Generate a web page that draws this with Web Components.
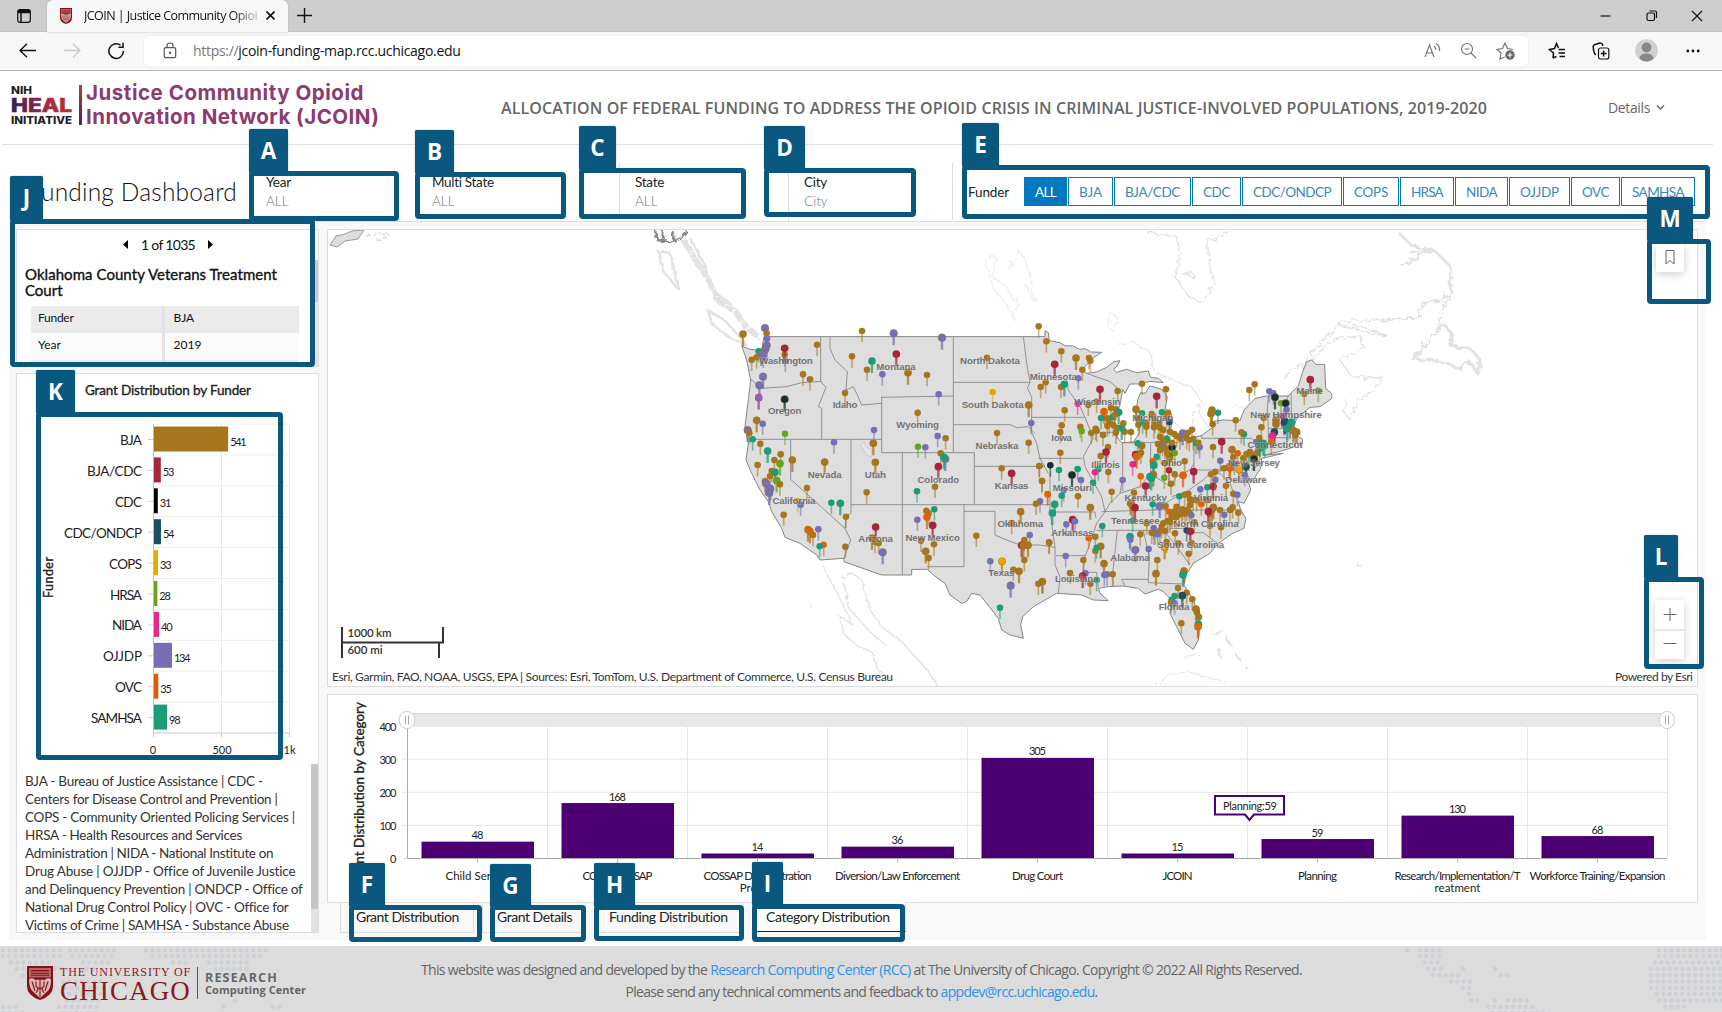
<!DOCTYPE html>
<html lang="en">
<head>
<meta charset="utf-8">
<title>JCOIN | Justice Community Opioid Innovation Network</title>
<style>
html,body{margin:0;padding:0;background:#fff;width:1722px;height:1012px;overflow:hidden}
body{font-family:"Open Sans","Liberation Sans",sans-serif}
</style>
</head>
<body>
<funding-page></funding-page>
<script>
const define = (name, css, html, after) => {
  const t = document.createElement('template');
  t.innerHTML = `<style>*{box-sizing:border-box}${css}</style>`;
  customElements.define(name, class extends HTMLElement {
    connectedCallback() {
      if (this.shadowRoot) return;
      const root = this.attachShadow({mode: 'open'});
      root.innerHTML = t.innerHTML + (typeof html === 'function' ? html(this) : html);
      if (after) after(this, root);
    }
  });
};

/* Single line of text whose tracking adapts to a given width */
define('fit-text', ':host{display:inline-block;white-space:nowrap}span{display:inline-block}', '<span><slot></slot></span>', (el, root) => {
  const w = parseFloat(el.getAttribute('w')), s = root.querySelector('span');
  if (!w) return;
  const n = el.textContent.length;
  s.style.letterSpacing = ((w - s.getBoundingClientRect().width) / n) + 'px';
  el.style.width = w + 'px';
});

define('uc-crest', ':host{display:block}svg{display:block;width:100%;height:100%}', `
<svg viewBox="0 0 26 33" preserveAspectRatio="none"><path d="M0 0H26V20Q26 29 13 33Q0 29 0 20Z" fill="#8a0f14"/>
<path d="M2 2H24V11H2Z" fill="#b06a6c"/><path d="M4 4.5H22M4 7H22M4 9H22" stroke="#8a0f14" stroke-width="1"/>
<path d="M2 12.5Q6 11 9 14Q11 12 13 14Q15 12 17 14Q20 11 24 12.5Q24.500 21 20 25L13 31L6 25Q2 21 2 12.500Z" fill="#d9b5b5"/>
<path d="M13 14V30M9 15V19L11 22M17 15V19L15 22M5 15L8 24M21 15L18 24M9 26L12 21M17 26L14 21" stroke="#8a0f14" stroke-width="1.100" fill="none"/></svg>`);

define('browser-chrome', `
:host{display:block;height:71px;background:#f7f7f7;border-bottom:1px solid #b5b5b5;font:13px "Open Sans",sans-serif;color:#111}
.tabs{height:32px;background:#cdcdcd;display:flex;align-items:center;border-bottom:1px solid #c2c2c2}
.side{width:47px;padding-left:17px;display:flex}
.tab{width:241px;height:32px;background:#f7f7f7;border-radius:6px 6px 0 0;display:flex;align-items:center;padding-left:13px;box-shadow:0 0 2px #aaa}
uc-crest{width:12px;height:16px;margin-right:12px}
.name{width:173px;height:18px;line-height:17px;font-size:12.500px;white-space:nowrap;-webkit-mask:linear-gradient(90deg,#000 86%,#0004 99%)}
svg{display:block;fill:none;stroke:#111;stroke-width:1.200;flex:none}
.win{margin-left:auto;display:flex;gap:33px;padding-right:19px}
.bar{height:37px;display:flex;align-items:center}
.field{width:1384px;height:30px;background:#fff;border-radius:4px;box-shadow:0 0 2px #ddd;display:flex;align-items:center;padding-left:19px;font-size:14px}
.url{margin-left:16px}.url i{font-style:normal;color:#777}
.r{margin-left:auto;display:flex;gap:19px;padding-right:13px}
`, `
<div class="tabs"><div class="side"><svg width="14" height="14"><rect x=".7" y=".7" width="12.600" height="12.600" rx="2"/><path d="M1 3.500H13M4 4V13" stroke-width="1.500"/><path d="M1 2H13" stroke-width="2"/></svg></div>
<div class="tab"><uc-crest></uc-crest><div class="name"><fit-text w="173">JCOIN | Justice Community Opioi</fit-text></div><svg style="margin-left:9px" width="9" height="9"><path d="M.5 .5L8.500 8.500M8.500 .5L.5 8.500" stroke-width="1.700"/></svg></div>
<svg style="margin-left:9px" width="15" height="15"><path d="M7.500 0V15M0 7.500H15" stroke-width="1.400"/></svg>
<div class="win"><svg width="11" height="12"><path d="M.5 6H10.500"/></svg><svg style="margin-left:2px" width="12" height="12"><rect x="1" y="3" width="7.500" height="7.500" rx="1.500"/><path d="M3.500 1H9Q10.500 1 10.500 2.500V8"/></svg><svg width="12" height="12"><path d="M1 1L11 11M11 1L1 11"/></svg></div></div>
<div class="bar"><svg style="margin-left:19px" width="17" height="15"><path d="M17 7.500H1M8 .8L1 7.500L8 14.200" stroke-width="1.400"/></svg>
<svg style="margin-left:28px;stroke:#c9c9c9" width="17" height="15"><path d="M0 7.500H16M9 .8L16 7.500L9 14.200" stroke-width="1.300"/></svg>
<svg style="margin-left:27px" width="17" height="18"><path d="M15.500 9A7.300 7.300 0 1 1 12.500 3.200M15 .8V5.200H10.500" stroke-width="1.500"/></svg>
<div class="field" style="margin-left:19px"><svg width="14" height="17" style="stroke:#555"><rect x="1.200" y="5.700" width="11.500" height="10" rx="1.500"/><path d="M4 5.500V3.500Q4 1 7 1Q10 1 10 3.500V5.500"/><circle cx="7" cy="10.700" r=".6" fill="#555"/></svg>
<span class="url"><fit-text w="267.500"><i>https://</i>jcoin-funding-map.rcc.uchicago.edu</fit-text></span>
<div class="r"><svg width="17" height="17" style="stroke:#777"><path d="M1 15L5.500 3L10 15M2.800 11H8.300M10 4Q12 5.500 12 8M12 1.500Q16 4 15.500 9"/></svg><svg width="17" height="17" style="stroke:#777"><circle cx="7" cy="7" r="5.500"/><path d="M11 11L16 16M4.500 7H9.500"/></svg><svg width="19" height="18" style="stroke:#777"><path d="M9 15L4 17L5 11L1 7.500L6.500 6.500L9 1L11.500 6.500L17 7.500"/><circle cx="14" cy="13" r="4.700" fill="#666" stroke="none"/><path d="M14 10.500V15.500M11.500 13H16.500" stroke="#fff"/></svg></div></div>
<svg style="margin-left:20px" width="18" height="18"><path d="M5 16L5.500 11L1.500 7.500L6.500 6.500L8.500 1.500L10.500 6M10.500 7.500H17M10.500 11H17M11.500 14.500H17M5 16L8.500 14.500" stroke-width="1.500"/></svg>
<svg style="margin-left:26px" width="18" height="18"><rect x="6.500" y="6" width="10.300" height="11" rx="2"/><path d="M11.600 8.500V14.500M8.800 11.500H14.500M3.800 13Q1.500 11 1.200 5Q1 3 3 2.500L8 1Q10 .8 10.700 3V4" stroke-width="1.500"/></svg>
<svg style="margin-left:25px;stroke:none" width="23" height="23"><circle cx="11.500" cy="11.500" r="11.300" fill="#d2d0ce"/><circle cx="11.500" cy="8.500" r="4.900" fill="#8a8886"/><path d="M4.500 19.500Q5 14.500 11.500 14.500Q18 14.500 18.500 19.500Q15 22.500 11.500 22.500Q8 22.500 4.500 19.500" fill="#8a8886"/></svg>
<svg style="margin-left:28px;stroke:none;fill:#111" width="14" height="4"><circle cx="1.800" cy="2" r="1.400"/><circle cx="7" cy="2" r="1.400"/><circle cx="12.200" cy="2" r="1.400"/></svg></div>`);

define('heal-logo', `:host{display:block;width:68px;height:42px;font-family:Inter,"Open Sans",sans-serif;font-weight:800}svg{display:block}`,
 `<svg width="68" height="42" fill="#222"><defs><linearGradient id="g" x1="0" x2="62" gradientUnits="userSpaceOnUse"><stop stop-color="#352052"/><stop offset=".6" stop-color="#a52b49"/><stop offset="1" stop-color="#b93627"/></linearGradient></defs>
<text y="9.500" font-size="10.500" textLength="21" lengthAdjust="spacingAndGlyphs">NIH</text><text y="27.500" font-size="18.500" fill="url(#g)" stroke="url(#g)" stroke-width=".6" textLength="61" lengthAdjust="spacingAndGlyphs">HEAL</text><text y="39.500" font-size="10.500" textLength="61" lengthAdjust="spacingAndGlyphs">INITIATIVE</text></svg>`);

define('site-header', `
:host{display:flex;height:74px;margin:0 9px 0 2px;border-bottom:1px solid #e0e0e0;align-items:center;color:#666;font:14px "Open Sans",sans-serif}
heal-logo{margin:-5px 0 0 9px}
.rule{width:3px;height:40px;background:linear-gradient(#c0392f,#4a2456);margin-top:-5px}
.name{margin-left:4px;font:700 20.500px/24px Inter,sans-serif;color:#8c3a70;width:293px;margin-top:-6px}
.t{margin-left:122px;font-weight:600;font-size:16px}
.d{margin-left:121px;display:flex;align-items:center;gap:6px;margin-top:-1px}
`, `<heal-logo></heal-logo><div class="rule"></div>
<div class="name"><fit-text w="278">Justice Community Opioid</fit-text><br><fit-text w="293">Innovation Network (JCOIN)</fit-text></div>
<div class="t"><fit-text w="986">ALLOCATION OF FEDERAL FUNDING TO ADDRESS THE OPIOID CRISIS IN CRIMINAL JUSTICE-INVOLVED POPULATIONS, 2019-2020</fit-text></div>
<div class="d"><fit-text w="42">Details</fit-text><svg width="9" height="7" fill="none" stroke="#666" stroke-width="1.500"><path d="M1 1.500L4.500 5L8 1.500"/></svg></div>`);

define('filter-select', `:host{display:block;margin-top:18px;height:58px;border-left:1px solid #ddd;padding-top:10px;line-height:18.500px;font-size:13.500px;color:#222}.v{color:#777;font-weight:300}`,
 el => `<div><fit-text w="${el.getAttribute('w')}">${el.getAttribute('label')}</fit-text></div><div class="v">${el.getAttribute('value')}</div>`);

const funders = [['ALL',43],['BJA',45],['BJA/CDC',77],['CDC',49],['CDC/ONDCP',100],['COPS',56],['HRSA',54],['NIDA',53],['OJJDP',61],['OVC',49],['SAMHSA',74]];
define('funder-filter', `:host{display:flex;align-items:center;font-size:13.500px;padding-left:15px;margin-top:18px;height:57px;border-left:1px solid #ddd;color:#222}
.b{display:flex;gap:1px;margin-left:15px}.b div{height:29px;border:1px solid #0079c1;color:#3a86bf;display:flex;align-items:center;justify-content:center;white-space:nowrap}.b div:first-child{background:#0079c1;color:#fff}`,
 `<fit-text w="41">Funder</fit-text><div class="b">${funders.map(([n,w]) => `<div style="width:${w}px"><fit-text w="${w-22}">${n}</fit-text></div>`).join('')}</div>`);

define('filter-bar', `:host{display:grid;grid-template-columns:240px 168px 202px 169px 164px 1fr;height:77px;background:#fff;border-bottom:1px solid #ddd;font-family:Lato,"Open Sans",sans-serif}
.t{font:300 24.500px/30px Lato,sans-serif;color:#111;text-align:right;padding:32px 12px 0 0}`,
 `<div class="t"><fit-text w="209">Funding Dashboard</fit-text></div><filter-select style="padding-left:16px" label="Year" value="ALL" w="25"></filter-select><filter-select style="padding-left:14px" label="Multi State" value="ALL" w="62"></filter-select><filter-select style="padding-left:15px" label="State" value="ALL" w="29"></filter-select><filter-select style="padding-left:15px" label="City" value="City" w="23"></filter-select><funder-filter></funder-filter>`);

define('grant-card', `:host{display:block;height:138px;background:#fff;border:1px solid #ddd;color:#111;padding:5px 0 0;overflow:hidden}
.row{display:flex}.main{width:298px}.scroll{width:3px;height:107px;margin-top:25px;background:linear-gradient(#c9c9c9 42px,#e4e4e4 42px)}
.nav{display:flex;justify-content:center;gap:13px;align-items:center;height:18px;font-size:14px;padding-left:4px}
h3{font:400 15px/16px Lato,sans-serif;-webkit-text-stroke:.35px #111;margin:13px 8px 0 8px}
table{border-collapse:collapse;margin:8px 0 0 14px;width:268px;font-size:12px}
td{height:27px;padding:0 0 4px 7px;background:#fafafa}td+td{border-left:3px solid #e2e2e2;width:136px;padding-left:9px}tr:first-child td{background:#ebebeb}`,
 `<div class="row"><div class="main"><div class="nav"><svg width="5" height="9"><path d="M5 0V9L0 4.500Z"/></svg><fit-text w="54">1 of 1035</fit-text><svg width="5" height="9"><path d="M0 0V9L5 4.500Z"/></svg></div>
<h3><fit-text w="252">Oklahoma County Veterans Treatment</fit-text><br>Court</h3><table><tr><td><fit-text w="35.500">Funder</fit-text></td><td>BJA</td></tr><tr><td>Year</td><td>2019</td></tr><tr><td style="background:#ebebeb"></td><td style="background:#ebebeb"></td></tr></table></div><div class="scroll"></div></div>`);

const byFunder = [['BJA',541,'#a6761d',22],['BJA/CDC',53,'#a6253c',55],['CDC',31,'#000',27],['CDC/ONDCP',54,'#1b4d63',78],['COPS',33,'#e6ab02',33],['HRSA',28,'#66a61e',32],['NIDA',40,'#e7298a',30],['OJJDP',134,'#7570b3',39],['OVC',35,'#d95f02',27],['SAMHSA',98,'#1b9e77',51]];
define('funder-chart', `:host{display:block;height:363px}svg{display:block;font-size:13.500px;fill:#222}.v{font-size:11px}`, () => {
  let s = '<svg width="301" height="363" viewBox="17 399 301 363"><path d="M221.500 424V733M289.500 424V733" stroke="#e8e8e8"/>';
  byFunder.forEach(([n,v,c,w], i) => {
    const y = 424 + i * 30.9, b = v * .138;
    s += `<path d="M153 ${y}H290" stroke="#eee"/><path d="M148 ${y+15.500}H153" stroke="#ccc"/>
<rect x="153.500" y="${y+2.500}" width="${b}" height="25" fill="${c}"/><text x="142" y="${y+21}" text-anchor="end" textLength="${w}">${n}</text><text class="v" x="${153+b+2.500}" y="${y+21.500}" textLength="${v>99?16.5:11.5}">${v}</text>`;
  });
  return s + `<path d="M153.500 424V733" stroke="#bbb"/><path d="M153 733H290M153.500 733V737M221.500 733V737M289.500 733V737" stroke="#c8c8c8" fill="none"/>
<g class="v" text-anchor="middle"><text x="153" y="754">0</text><text x="222" y="754">500</text><text x="289.500" y="754">1k</text></g>
<text transform="translate(52.500 598) rotate(-90)" stroke="#222" stroke-width=".35" font-size="12.500" textLength="41">Funder</text></svg>`;
});

const glossary = [['BJA - Bureau of Justice Assistance | CDC -',238],['Centers for Disease Control and Prevention |',253],['COPS - Community Oriented Policing Services |',270],['HRSA - Health Resources and Services',217],['Administration | NIDA - National Institute on',249],['Drug Abuse | OJJDP - Office of Juvenile Justice',270],['and Delinquency Prevention | ONDCP - Office of',277],['National Drug Control Policy | OVC - Office for',263],['Victims of Crime | SAMHSA - Substance Abuse',264]];
define('funder-card', `:host{display:block;height:560px;background:#fff;border:1px solid #ddd;overflow:hidden;color:#222}
.h{font:400 13.500px/18px Lato,sans-serif;-webkit-text-stroke:.35px #222;padding:7px 0 0 68px;height:25px}
.g{display:flex;justify-content:space-between;font-size:13.500px;line-height:18px;padding-left:8px;margin-top:2px;color:#333}.l{padding-top:8px}.l fit-text{display:block}
.s{width:7px;height:170px;background:linear-gradient(#c6c6c6 145px,#e2e2e2 145px)}`,
 `<div class="h"><fit-text w="166">Grant Distribution by Funder</fit-text></div><funder-chart></funder-chart><div class="g"><div class="l">${glossary.map(([t,w]) => `<fit-text w="${w}">${t}</fit-text>`).join('')}</div><div class="s"></div></div>`);

/* Pins: colour letter (capital for a large pin) and position, on a 3x grid */
const colours = {b:'#a6761d',p:'#7570b3',g:'#1b9e77',r:'#a6253c',o:'#e06208',k:'#122d33',y:'#e6a800',l:'#66a61e',m:'#e7298a',n:'#1b4d63'};
const west = `B69,72 P135,54 b140,70 p141,86 g116,124 P140,106 P136,118 P124,132 p130,140 b110,142 b95,149 b291,104 b194,134 p196,152 R194,115 b249,193 b270,208 P129,200 P118,226 M116,263 p116,263 K194,268 B110,331 p128,341 l195,371 P83,360 b88,369 g98,388 b121,401 G143,423 b182,433 b163,450 b113,465 B217,450 b155,483 L180,461 G165,487 b150,499 b135,513 L170,511 b180,523 P138,520 P151,536 P148,549 b191,614 y233,573 p242,584 b261,534 g334,578 G361,580 b378,620 b376,710 o311,704 g299,709 B264,659 O270,664 b279,675 p295,658 b426,63 P521,70 P666,83 b396,139 G456,153 R529,132 b441,179 p487,193 B564,188 b621,195 b375,249 p656,253 b593,308 B460,400 p342,397 B314,456 B466,457 p462,360 b440,547 p653,378 b677,385 l594,410 p616,412 b662,430 P676,447 G672,442 R655,470 b645,530 g591,544 b619,602 b626,610 g643,598 O621,621 p592,629 R638,646 b603,692 b642,703 B617,724 b626,744 R467,651 B456,684 b465,696 b476,699 P488,727 b801,143 y818,246 b831,369 b926,398 B926,285 p934,339 b845,475 R875,490 b958,468 b966,513 k991,466 o983,553 p960,574 b948,581 B902,605 o875,639 b769,677 p929,675 b913,690 R905,706 B910,707 B924,706 b913,750 p811,754 B846,754 y846,754 b880,779 B897,784 P872,827 g840,893 b955,821 B967,815 b988,698`;
const east = `b26,49 b49,94 b94,124 B138,144 o177,144 b181,152 b157,179 R74,163 p145,205 b47,217 b32,231 b93,231 G103,223 b263,243 R210,238 b200,275 b175,284 m143,281 b104,301 O222,305 b243,293 b258,298 G266,307 g213,324 b231,325 g247,322 b238,339 b232,347 b262,353 b258,368 b303,366 b284,365 G275,354 b95,346 b91,366 b151,350 l155,363 b197,356 b184,369 b219,375 b91,428 b28,468 g87,480 g143,477 K126,495 p153,510 p101,541 g95,557 b144,559 b36,513 o53,553 G74,583 G67,609 B181,593 b245,545 R128,629 p135,634 p109,643 g217,648 o176,684 b196,680 b57,697 b196,723 B212,709 g200,713 p107,738 b160,750 B222,761 b120,789 p166,790 R158,798 b181,821 p223,795 p231,793 b248,793 g200,810 b38,815 b234,411 b212,438 R228,426 b235,486 g205,478 m195,487 g189,518 p278,510 m308,463 R317,434 B335,407 b333,428 O320,440 g323,400 o332,499 b336,221 b408,238 R380,259 B318,298 g336,310 b325,328 b325,344 g338,337 p370,319 g396,307 b414,310 o410,319 n418,336 b391,353 b400,360 b386,342 b372,352 b410,390 g410,386 b420,365 b433,372 b450,385 P458,370 b474,368 b486,359 b490,387 b470,385 b478,390 b384,402 p398,405 b412,430 b417,438 K426,412 l434,429 g380,440 o368,454 G371,466 b464,454 p509,412 g498,399 R491,485 r417,481 O459,496 b434,493 l403,503 B370,494 G364,505 G360,500 b423,521 R347,528 b312,548 B302,580 B308,590 g308,632 R315,593 g368,583 P389,588 b407,589 o418,605 b427,612 b435,603 b455,602 b470,600 b447,614 b465,611 b458,598 b478,608 p484,616 b438,622 b420,635 b400,640 b412,633 b425,620 g448,559 b464,554 b475,551 b480,568 b500,571 b489,570 o514,583 b530,570 B545,600 B550,592 b540,612 R535,605 p583,614 b608,592 b625,608 b570,600 b573,652 b540,647 b493,637 g532,532 R549,529 p511,538 b588,527 p556,509 b543,493 b556,485 b610,551 p622,554 p571,452 B600,474 O599,470 p613,462 B628,479 y628,478 N648,470 p644,495 b549,411 R575,395 B606,419 o623,430 b610,442 b640,445 g656,433 b667,438 b680,430 K672,447 b689,417 p679,396 g642,373 b634,367 b617,331 b582,475 B546,300 B543,311 g564,308 b548,343 b658,240 b674,223 p718,244 p730,250 K735,262 l753,280 K767,280 p770,299 b701,323 b694,352 b688,384 m756,318 B738,330 B738,342 N765,335 M763,340 N764,335 P780,350 G784,336 G772,356 B790,362 B800,366 b796,375 N733,366 M727,378 o724,395 G700,400 G690,404 g704,409 R841,209 l865,242 b823,251 n470,661 R481,664 p371,654 b372,670 b331,673 G300,680 p301,689 P316,720 p356,717 B404,712 y404,711 b410,696 b435,670 b406,663 p375,670 p383,673 b476,731 b382,750 B378,791 B462,783 G459,794 b444,834 b470,848 N457,857 g434,858 g425,869 b423,878 p434,880 b487,868 B498,897 b501,907 b507,921 b454,940 G505,943 O504,950 b250,345 b200,362 b255,314 b280,340 b349,340 b375,335 b365,312 b349,350 b390,380 b400,392 b440,378 b425,398 b505,398 b390,420 b405,415 b420,445 b405,460 b660,425 b650,432 b350,640 b390,662 b365,668 b395,650 b440,590 b480,585 b600,600 b485,700 b445,700`;
const pins = (src, dx) => src.split(' ').map(p => {
  const c = p[0], big = c !== c.toLowerCase(), col = colours[c.toLowerCase()];
  const [x, y] = p.slice(1).split(',').map(Number);
  return `<path d="M${x+dx} ${y+6}V${y+(big?36:34)}" stroke="${col}" stroke-width="${big?7:5}" opacity="${big?.75:.55}"/><circle cx="${x+dx}" cy="${y}" r="${big?11.500:9.800}" fill="${col}"${big&&'pk'.includes(c.toLowerCase())?' stroke="#8a6a4c" stroke-width="1.500"':''}/>`;
}).join('');
const labels = 'Washington,198,152,160|Montana,528,170,118|North Dakota,810,152,180|South Dakota,818,285,186|Oregon,194,302,100|Idaho,375,285,74|Wyoming,593,343,128|Nebraska,831,407,129|Nevada,314,494,102|Utah,466,495,63|Colorado,655,508,125|Kansas,875,528,101|California,222,573,129|Arizona,467,687,104|New Mexico,638,682,163|Oklahoma,901,640,137|Texas,844,788,79|Minnesota,1000,200,142|Wisconsin,1132,275,139|Iowa,1025,384,62|Michigan,1298,323,123|Illinois,1157,464,86|Ohio,1354,458,63|Missouri,1057,533,117|Kentucky,1277,564,127|Virginia,1473,564,103|Tennessee,1246,631,146|North Carolina,1458,641,196|South Carolina,1412,703,201|Arkansas,1057,667,126|Alabama,1230,744,118|Louisiana,1070,805,130|Florida,1362,891,92|Maine,1769,243,80|New Hampshire,1698,314,214|Connecticut,1665,405,165|New Jersey,1602,459,156|Delaware,1578,510,124'.split('|').map(l => l.split(','));
const land = 'M65 108L90 118L125 122L132 80H975V62L985 68L988 92L1020 98L1035 107L1060 108L1078 118L1095 116L1112 126L1145 127L1120 143L1105 160L1085 180L1100 190L1130 186L1160 172L1182 155L1200 152L1190 170L1180 178L1190 187L1220 178L1250 188L1285 183L1292 202L1315 205L1330 218L1290 214L1255 222L1230 222L1215 250L1208 238L1200 285L1190 310L1180 345L1188 378L1205 398L1240 396L1258 370L1260 340L1248 310L1253 270L1262 248L1275 250L1290 228L1325 238L1342 260L1335 300L1350 300L1358 330L1350 365L1335 388L1370 398L1400 390L1445 376L1478 352L1475 335L1510 330L1560 332L1572 300L1605 265L1640 258L1705 258L1717 245L1735 228L1748 185L1760 155L1775 150L1788 163L1814 163L1817 235L1835 250L1836 265L1800 290L1770 292L1745 312L1728 330L1720 360L1735 380L1748 388L1745 410L1730 395L1720 412L1680 424L1630 436L1690 430L1640 442L1625 445L1622 475L1597 515L1578 490L1592 540L1572 580L1555 575L1562 600L1578 625L1572 655L1535 672L1495 700L1470 730L1420 760L1398 795L1392 825L1420 870L1440 930L1435 990L1420 1018L1395 1000L1370 950L1350 910L1355 870L1330 845L1315 838L1275 852L1255 835L1210 828L1165 830L1135 835L1140 850L1165 872L1120 870L1085 855L1010 850L975 870L940 890L908 920L902 945L910 985L870 975L845 960L835 925L800 880L780 855L755 850L740 875L725 880L690 855L675 820L640 795L622 778H575V795H485L372 755V745L300 750L290 735L240 700L195 682L185 655L155 605L145 575L120 540L95 490L78 450L85 400L75 350L85 270L92 210L80 150Z';
const borders = 'M92 207L125 235L200 230L245 218L305 214M302 80V215L318 232L295 290L305 295V388M90 388H485M330 80V115L345 150L382 185L378 240L400 230L412 255L425 285L485 280M485 262L700 258M485 260V428H763M700 80V428M700 217H930M700 344H870L890 353L925 350L945 370M910 80L920 160L930 217L922 235L935 260V322L932 360L950 400L960 445L985 490M935 322H1095M763 469H975M547 428V584M763 428V584M393 388V584H990M212 388V508L375 655M393 584V610L378 620L375 655L392 690L372 745M547 584V795M732 584V770H622M732 604H825V675L860 690L900 705L960 705L1005 712M990 490V605L1005 712V765L1020 800L1015 850M995 606H1125L1128 625M1008 737H1095M955 445H1085M1040 210L1045 240L1080 290L1095 322L1110 360L1120 385L1090 440L1095 470L1120 515L1145 560L1155 605L1130 640L1110 700L1095 740L1090 787H1130L1135 830M1105 367H1190M1100 190L1170 215L1205 245M1208 398V500L1200 550M1292 400V490M1205 398H1292L1335 392M1155 605L1170 580L1200 550L1260 530L1292 490L1350 530L1370 500L1410 480L1422 460M1422 385V480H1590M1445 376V385H1595L1615 405L1600 430L1620 460L1595 480M1355 560L1400 545L1450 510L1475 485L1500 490L1530 520L1545 560M1145 605L1300 600H1565M1300 600L1370 560M1130 661H1330L1360 640L1390 602M1330 660L1360 655H1400L1420 668H1450L1492 700M1330 660L1370 710L1410 765M1192 661L1178 790L1180 830M1270 661L1288 740L1285 808M1205 808H1285V818L1385 822M1205 808L1215 828M1645 258L1642 300L1645 355V400M1705 258L1690 300L1685 355M1645 355H1715M1645 383H1700V400M1713 250L1715 330';
define('funding-map', `:host{display:block;height:458px;background:#fff;border:1px solid #ddd}svg{display:block}`, `
<svg width="1369" height="456" viewBox="328 230 1369 456"><defs><filter id="rough" x="-5%" y="-5%" width="110%" height="110%"><feTurbulence type="fractalNoise" baseFrequency=".18" numOctaves="2" seed="4"/><feDisplacementMap in="SourceGraphic" scale="8"/></filter>
<filter id="fine" x="-2%" y="-2%" width="104%" height="104%"><feTurbulence type="fractalNoise" baseFrequency=".25" numOctaves="1" seed="2"/><feDisplacementMap in="SourceGraphic" scale="2"/></filter></defs>
<g fill="none" stroke="#e2e2e2" stroke-width="1.400" filter="url(#rough)" transform="translate(2 2)">
<path stroke-width="6" stroke-dasharray="14 1 6 1.500" d="M681 237L695 260L708 280L716 298L734 310L744 325L758 336"/><path stroke-width="2.500" d="M688 236L702 262L712 290L728 301M656 249L662 270L677 288L671 265L668 251ZM706 308L722 318L738 335L745 344L728 336L710 322Z"/>
<path d="M984 260L994 250L990 275L1005 285L1012 300L1016 295L1012 317L1003 300L994 290L986 272ZM1008 268L1016 248L1024 258L1030 280L1032 300L1022 280M1108 310L1116 316L1113 331L1106 325Z" stroke="#eee"/>
<path d="M1146 231L1160 233L1174 234L1178 251L1174 275L1186 294L1199 301L1207 290L1213 284L1208 262L1204 240L1215 236L1225 229M1180 271L1190 270L1192 276Z"/>
<path stroke-width="2.500" d="M1398 232L1410 244L1430 248L1410 258L1400 264M1408 250L1432 248L1448 264L1449 290L1440 298L1424 300L1414 316L1380 318"/><path d="M1380 318L1340 319L1320 340L1302 360L1280 376M1300 366L1330 338L1358 334L1362 345L1338 358L1350 375L1380 376L1372 390L1356 398L1348 418L1342 410L1344 398"/>
<path d="M1336 323L1358 324L1386 334L1372 332ZM1450 288L1440 310L1434 330L1424 342"/><path stroke-width="3" d="M1412 357L1424 342L1442 322L1450 332L1448 343L1470 348L1478 358L1476 372L1468 360L1456 367L1442 360Z"/>
<path d="M1115 342L1130 340L1148 350L1153 371L1190 385L1200 400L1190 415L1195 435L1178 425L1160 410M1196 410L1210 430M1235 405L1260 410" stroke="#e8e8e8"/>
<path d="M820 562L835 591L848 617L850 622L838 615L842 632L858 646L870 650L876 668L892 678M842 576L848 570L860 578L868 608L880 625L900 640L925 668L940 690"/><path d="M885 644L868 630L846 605L842 576M808 601L809 604"/>
<path d="M1155 684L1166 673L1186 669L1204 676L1222 679M1182 656L1196 651" stroke="#ebebeb"/><path stroke-dasharray="12 5" stroke-width="2" d="M1210 632L1222 630L1228 643M1216 645L1220 660M1232 650L1246 668M1355 564L1358 562"/></g>
<path d="M330 245L336 236L345 234L352 231L364 230L358 239L345 241L337 247Z" fill="#dedede" stroke="#999"/><path filter="url(#rough)" d="M655 230L657 240L668 242L680 239L687 230M662 230L665 240M672 230L674 240" stroke="#888" stroke-width="2.500" fill="none"/><path d="M365 234L388 233M376 240L389 236" stroke="#ddd" stroke-width="2" stroke-dasharray="4 3" filter="url(#rough)"/>
<g transform="translate(720 310) scale(.33333)"><g filter="url(#fine)"><path d="${land}" fill="#dedede" stroke="#858585" stroke-width="3"/></g><path d="${borders}" fill="none" stroke="#858585" stroke-width="2.600"/>
<path d="M422 405L432 396L440 412L455 418L455 440L440 436L430 420Z" fill="#e6e6e6" stroke="#c0c0c0" stroke-width="2"/>
${pins(west,0)}${pins(east,930)}
<g font-family="Liberation Sans" font-weight="700" font-size="29" fill="#555" fill-opacity=".8" text-anchor="middle" stroke="#ddd" stroke-opacity=".35" stroke-width="4" paint-order="stroke">${labels.map(([n,x,y,w]) => `<text x="${x}" y="${+y+10}" textLength="${w}">${n}</text>`).join('')}</g></g>
<path d="M342 627V658M342 642.500H443V627M342 642.500H439V658" stroke="#333" stroke-width="2" fill="none"/>
<g fill="#333"><text x="347.500" y="637" textLength="44" font-weight="600" font-size="11.500">1000 km</text><text x="347.500" y="654" textLength="35" font-weight="600" font-size="11.500">600 mi</text>
<g font-family="Lato" font-size="12"><text x="332" y="681" textLength="561">Esri, Garmin, FAO, NOAA, USGS, EPA | Sources: Esri, TomTom, U.S. Department of Commerce, U.S. Census Bureau</text><text x="1615" y="681" textLength="78">Powered by Esri</text></g></g>
<g fill="#fff" style="filter:drop-shadow(0 2px 4px #0003)"><rect x="1656" y="244" width="28" height="28" rx="2"/><rect x="1655" y="600" width="29" height="59"/></g>
<path d="M1655 630H1684" stroke="#ccc"/><path d="M1666 250.500H1674V264L1670 260.500L1666 264ZM1663.500 614.500H1676.500M1670 608V621M1663.500 643.500H1676.500" stroke="#666" fill="none"/></svg>`);

const categories = [['Child Services',48],['COAP/COSSAP',168,70],['COSSAP Demonstration|Project',14,108],['Diversion/Law Enforcement',36,125],['Drug Court',305,51],['JCOIN',15,30],['Planning',59,39],['Research/Implementation/T|reatment',130,126],['Workforce Training/Expansion',68,136]];
define('category-chart', `:host{display:block;height:209px;background:#fff;border:1px solid #ddd;margin-top:7px}svg{display:block;font-size:11px;fill:#222}`, () => {
  let s = '<svg width="1369" height="207" viewBox="328 695 1369 207"><rect x="407" y="713" width="1260" height="13.500" fill="#e8e8e8"/><path d="M407 713.500H1667" stroke="#d8d8d8"/>';
  for (let i = 0; i < 5; i++) { const y = 858.5 - i * 33.1; s += `<path d="M402 ${y}H1667" stroke="#e6e6e6"/><text x="396.500" y="${y+4.500}" text-anchor="end" textLength="${i?17:5.5}">${i*100}</text>`; }
  categories.forEach(([n,v,w], i) => {
    const x = 407.5 + i * 140, c = x + 70, h = Math.max(v * .33, 5), b = i === 0 ? h + 1 : h;
    s += `<path d="M${x+140} 727V858" stroke="#e6e6e6"/><path d="M${c} 858V863" stroke="#bbb"/><rect x="${c-56}" y="${858.5-b}" width="112.500" height="${b}" fill="#4c0073"/><text x="${c}" y="${856-b}" text-anchor="middle" textLength="${v>99?17:12}">${v}</text>`;
    n.split('|').forEach((t, k) => s += `<text font-size="11.500" x="${i===0?445.500:c}" y="${879.500+k*12}" text-anchor="${i===0?'start':'middle'}"${w&&!k?` textLength="${w}"`:''}>${t}</text>`);
  });
  return s + `<path d="M407.500 727V858.500H1667" stroke="#aaa" fill="none"/>
${[407,1667].map(x => `<ellipse cx="${x}" cy="720" rx="8" ry="8.500" fill="#fff" stroke="#ccc"/><path d="M${x-1.500} 715.500V724.500M${x+1.500} 715.500V724.500" stroke="#aaa"/>`).join('')}
<text transform="translate(363.500 885) rotate(-90)" stroke="#222" stroke-width=".35" font-size="13.500" textLength="183">Grant Distribution by Category</text>
<path d="M1215 796H1284V814.500H1254L1249.500 820L1245 814.500H1215Z" fill="#fff" stroke="#4c0073" stroke-width="2"/><text x="1223" y="809.500" textLength="54">Planning:59</text></svg>`;
});

define('view-tabs', `:host{display:flex;height:30px;margin-left:13px;font-size:14px;color:#222}
div{border:1px solid #ddd;border-top:0;padding-top:5px;height:30px;line-height:18px;margin-right:8px}.on{background:#fff;border-bottom:1px solid #4c0073;margin-top:-1px;padding-top:6px;height:30px}`,
 `<div style="width:134px;padding-left:15px"><fit-text w="103">Grant Distribution</fit-text></div><div style="width:104px;padding-left:14px"><fit-text w="75">Grant Details</fit-text></div><div style="width:150px;padding-left:14px"><fit-text w="119">Funding Distribution</fit-text></div><div class="on" style="width:154px;padding-left:13px"><fit-text w="124">Category Distribution</fit-text></div>`);

define('funding-dashboard', `:host{display:block;height:795px;margin:0 16px 0 9px;background:#f8f8f8;font-family:Lato,"Open Sans",sans-serif}
main{display:grid;grid-template-columns:303px 1371px;gap:8px;padding:7px 0 0 7px}.l{display:flex;flex-direction:column;gap:6px}`,
 `<filter-bar></filter-bar><main><div class="l"><grant-card></grant-card><funder-card></funder-card></div><div><funding-map></funding-map><category-chart></category-chart><view-tabs></view-tabs></div></main>`);

const dotRows = [[[0,60],[67,116],[143,268],[1404,1406],[1417,1438],[1656,1722]],[[0,58],[70,108],[150,262],[1417,1438],[1656,1722]],[[8,52],[80,108],[170,188],[206,248],[1422,1436],[1652,1722]],[[14,60],[84,96],[212,246],[1425,1438],[1460,1462],[1492,1494],[1648,1722]],[[20,30],[220,232],[1430,1457],[1498,1508],[1648,1722]],[[60,100],[1448,1470],[1648,1722]],[[62,104],[1460,1470],[1648,1722]],[[60,98],[1466,1468],[1654,1722]],[[64,96],[232,236],[1468,1476],[1492,1494],[1505,1526],[1656,1722]],[[0,14],[56,98],[220,224],[270,280],[1485,1534],[1662,1684]],[[0,20],[60,92],[1490,1546]]];
define('site-footer', `:host{display:grid;grid-template:66px/1fr;height:66px;margin-top:6px;background:#dcdcdc;color:#666;font-size:14px}
:host>*{grid-area:1/1}.row{display:flex;padding-left:27px}
uc-crest{width:26px;height:34px;margin-top:20px}.u{width:132px;margin-left:7px;color:#8a1a1d;padding-top:18px;font-family:"Liberation Serif",serif}
.u div{height:16px;line-height:16px;font-size:12px}.u .c{height:24px;line-height:22px;font-size:27px}
.v{width:1px;height:32px;background:#555;margin:21px 7px 0 5px}.rc{width:102px;padding-top:25px;font:700 12.500px/14px "Open Sans",sans-serif;color:#666}.rc div+div{font-size:11px;line-height:10px}
.txt{margin-left:114px;padding-top:13px;width:881px;text-align:center;line-height:22px}b{font-weight:400;color:#2f91ea}`,
 `<svg width="1722" height="66" fill="#cdd1d5">${dotRows.map((r, j) => r.map(([a,b]) => { let s=''; for (let x=a+3;x<=b+3;x+=6.3) s+=`<circle cx="${x.toFixed(1)}" cy="${(4+j*6.3).toFixed(1)}" r="2.300"/>`; return s; }).join('')).join('')}</svg>
<div class="row"><uc-crest></uc-crest><div class="u"><div><fit-text w="131">THE UNIVERSITY OF</fit-text></div><div class="c"><fit-text w="131">CHICAGO</fit-text></div></div><div class="v"></div><div class="rc"><div><fit-text w="73">RESEARCH</fit-text></div><div><fit-text w="101">Computing Center</fit-text></div></div>
<div class="txt"><fit-text w="881">This website was designed and developed by the <b>Research Computing Center (RCC)</b> at The University of Chicago. Copyright © 2022 All Rights Reserved.</fit-text><br><fit-text w="472">Please send any technical comments and feedback to <b>appdev@rcc.uchicago.edu</b>.</fit-text></div></div>`);

/* Lettered marker over the page: a tag standing on an outlined frame */
define('call-out', `:host{position:absolute;display:block;border:5px solid #0a5780;border-radius:4px}
.k{position:absolute;background:#0a5780;border-radius:2px;box-shadow:0 0 1px #0a5780;color:#fff;font:700 22.500px/44px "Open Sans",sans-serif;text-align:center}`,
 el => { const [x,y,w,h] = el.getAttribute('tag').split(',').map(Number); return `<div class="k" style="left:${x-5}px;top:${y-5}px;width:${w}px;height:${h}px">${el.getAttribute('letter')}</div>`; },
 el => { const [a,b,c,d] = el.getAttribute('box').split(',').map(Number); Object.assign(el.style,{left:a+'px',top:b+'px',width:(c-a)+'px',height:(d-b)+'px',boxSizing:'border-box'}); });

const marks = [['A','249,171,399,220.5','0,-42,39,44'],['B','415,172,566,219','0,-42,39,44'],['C','579,168,746,219','0,-42,37,44'],['D','764,168,916,217','0,-42,41,44'],['E','962,165,1710,219','0,-42,37,44'],['J','10,219,315,367','0,-43,33,45'],['K','36,412,283,760','0,-42,39,44'],['F','349,905,482,942','0,-42,36,44'],['G','490,905,586,942','0,-41,41,43'],['H','594,905,744,941','0,-42,41,44'],['I','752,904,905,942','0,-42,31,44'],['L','1644,577,1704,669','0,-42,34,44'],['M','1647,239,1711,304','0,-42,46,44']];
define('funding-page', `:host{display:flex;flex-direction:column;position:relative;width:1722px;height:1012px;overflow:hidden;background:#fff;font-family:"Open Sans",sans-serif}`,
 `<browser-chrome></browser-chrome><site-header></site-header><funding-dashboard></funding-dashboard><site-footer></site-footer>${marks.map(([l,b,t]) => `<call-out letter="${l}" box="${b}" tag="${t}"></call-out>`).join('')}`);
</script>
</body>
</html>
